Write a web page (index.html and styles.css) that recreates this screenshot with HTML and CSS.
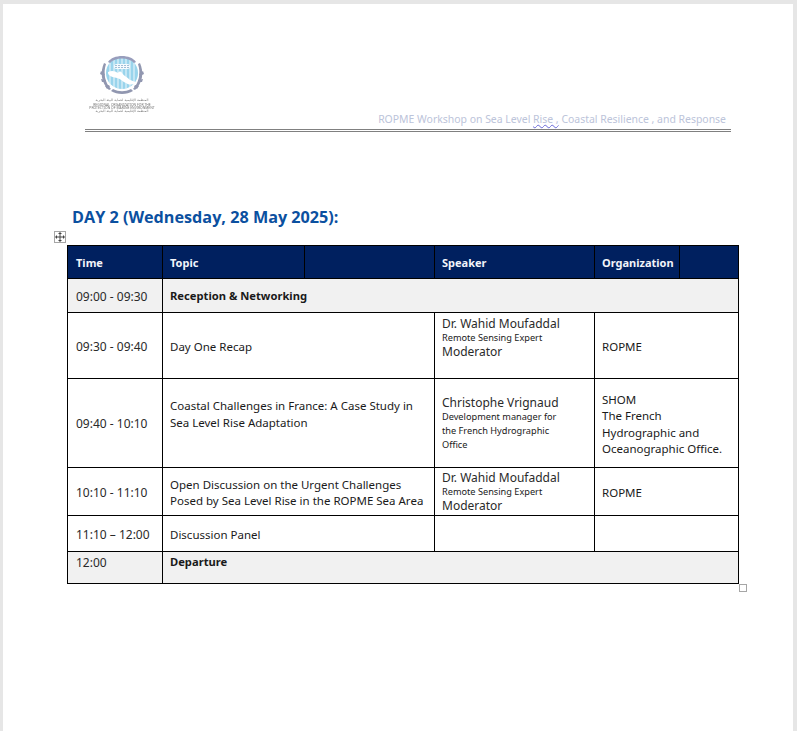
FILE: index.html
```html
<!DOCTYPE html>
<html lang="en">
<head>
<meta charset="utf-8">
<title>DAY 2</title>
<link rel="stylesheet" href="styles.css">
</head>
<body>
<div class="page">
  <header class="doc-header">
    <div class="logo">
      <svg class="logo-mark" width="46" height="46" viewBox="0 0 46 46" aria-hidden="true">
        <circle cx="23" cy="22" r="16" fill="#8fd0ea"/>
        <g stroke="#e4f4fa" stroke-width="1.1">
          <path d="M11 12V33M15 9V36M19 7V38M23 7V38M27 7V38M31 9V36M35 12V33"/>
        </g>
        <path d="M9 21c4-2 7-1 10 1 1-2 3-2 4 0 2 3 5 4 8 7 2 1 5 1 6 3-3 2-7 2-10 0-3-1-5-4-9-5-3-1-6-1-8-3-1-1-1-2-1-3z" fill="#fff"/>
        <rect x="15" y="13" width="16" height="5" rx="2.5" fill="#f4fbfe"/>
        <path d="M16 14.5h14M16 16.5h14" stroke="#7fa6c6" stroke-width=".8" stroke-dasharray="2 1"/>
        <path d="M9 11C14 3 32 3 37 11l-2 1C30 6 16 6 11 12z" fill="#8d93b5"/>
        <g fill="#868ca8">
          <path d="M5 12c-4 9-3 20 5 27l2-1C6 32 4 22 7 13z"/>
          <path d="M41 12c4 9 3 20-5 27l-2-1c6-6 8-16 5-25z"/>
          <path d="M2 20l4 3-1 2-4-2zM2 28l5 1 0 2-4 0zM6 35l4-1 1 2-3 2zM44 20l-4 3 1 2 4-2zM44 28l-5 1 0 2 4 0zM40 35l-4-1-1 2 3 2z"/>
          <path d="M12 40c6 4 16 4 22 0l-2-2c-6 3-12 3-18 0z"/>
        </g>
      </svg>
      <div class="logo-text">
        <span class="logo-ar">المنظمة الإقليمية لحماية البيئة البحرية</span>
        <span>REGIONAL ORGANIZATION FOR THE</span>
        <span>PROTECTION OF MARINE ENVIRONMENT</span>
        <span class="logo-ar">المنظمة الإقليمية لحماية البيئة البحرية</span>
      </div>
    </div>
    <p class="doc-title">ROPME Workshop on Sea Level <span class="spell">Rise ,</span> Coastal Resilience , and Response</p>
  </header>

  <h1 class="day-title">DAY 2 (Wednesday, 28 May 2025):</h1>

  <div class="table-wrap">
    <span class="move-handle">
      <svg width="10" height="10" viewBox="0 0 10 10" aria-hidden="true"><path d="M5 1v8M1 5h8" fill="none" stroke="#444" stroke-width="1"/><path d="M5 0 7 2H3zM5 10 3 8h4zM0 5l2-2v4zM10 5 8 7V3z" fill="#444"/></svg>
    </span>
    <table class="agenda">
      <colgroup>
        <col class="c-time"><col class="c-topic-a"><col class="c-topic-b"><col class="c-speaker"><col class="c-org-a"><col class="c-org-b">
      </colgroup>
      <tr class="r-head">
        <th>Time</th><th>Topic</th><th></th><th>Speaker</th><th>Organization</th><th></th>
      </tr>
      <tr class="r-grey r-34">
        <td class="time">09:00 - 09:30</td><td colspan="5" class="strong">Reception &amp; Networking</td>
      </tr>
      <tr class="r-66">
        <td class="time">09:30 - 09:40</td><td colspan="2">Day One Recap</td>
        <td class="raised"><div class="name">Dr. Wahid Moufaddal</div><div class="role">Remote Sensing Expert</div><div class="name">Moderator</div></td>
        <td colspan="2">ROPME</td>
      </tr>
      <tr class="r-89">
        <td class="time">09:40 - 10:10</td><td colspan="2" class="raised-more">Coastal Challenges in France: A Case Study in Sea Level Rise Adaptation</td>
        <td class="lowered"><div class="name">Christophe Vrignaud</div><div class="role">Development manager for<br>the French Hydrographic<br>Office</div></td>
        <td colspan="2">SHOM<br>The French<br>Hydrographic and<br>Oceanographic Office.</td>
      </tr>
      <tr class="r-48">
        <td class="time">10:10 - 11:10</td><td colspan="2">Open Discussion on the Urgent Challenges Posed by Sea Level Rise in the ROPME Sea Area</td>
        <td class="plain"><div class="name">Dr. Wahid Moufaddal</div><div class="role">Remote Sensing Expert</div><div class="name">Moderator</div></td>
        <td colspan="2">ROPME</td>
      </tr>
      <tr class="r-36">
        <td class="time">11:10 – 12:00</td><td colspan="2">Discussion Panel</td><td></td><td colspan="2"></td>
      </tr>
      <tr class="r-grey r-32 r-top">
        <td class="time">12:00</td><td colspan="5" class="strong">Departure</td>
      </tr>
    </table>
    <span class="resize-handle"></span>
  </div>
</div>
</body>
</html>
```
FILE: styles.css
```css
* { box-sizing: border-box; }
html, body { margin: 0; height: 100%; }
body {
  background: #e6e6e6;
  overflow: hidden;
  font-family: "Noto Sans", "Open Sans", sans-serif;
  color: #1a1a1a;
}
.page {
  margin: 4px 4px 0 3px;
  height: 727px;
  background: #fff;
  padding: 0 54px 0 64px;
}
.doc-header {
  margin: 0 8px 0 18px;
  padding-top: 47px;
  border-bottom: 3px double #808080;
  display: flex;
  justify-content: space-between;
  align-items: flex-start;
  box-sizing: content-box;
  height: 78px;
}
.logo {
  width: 70px;
  margin-left: 2px;
  display: flex;
  flex-direction: column;
  align-items: center;
  filter: blur(.35px);
  opacity: .9;
}
.logo-mark { display: block; margin-bottom: 2px; }
.logo-text {
  display: flex;
  flex-direction: column;
  align-items: center;
  font-size: 3.4px;
  line-height: 3.6px;
  color: #666;
  white-space: nowrap;
}
.logo-ar { font-family: "DejaVu Sans", sans-serif; }
.doc-title {
  margin: 61px 5px 0 0;
  font-size: 10.45px;
  line-height: 15px;
  color: #bcc4da;
  white-space: nowrap;
}
.spell { text-decoration: underline wavy #6a6ad8 1px; text-underline-offset: 1px; }
.day-title {
  margin: 73px 0 0 5px;
  font-family: "Open Sans", sans-serif;
  font-size: 16.2px;
  line-height: 24px;
  font-weight: 700;
  color: #0b50a0;
  white-space: nowrap;
}
.table-wrap { position: relative; margin-top: 16px; width: 671px; }
.move-handle {
  position: absolute;
  left: -13px;
  top: -14px;
  width: 12px;
  height: 12px;
  border: 1px solid #a6a6a6;
  background: #fff;
  display: flex;
  align-items: center;
  justify-content: center;
}
.resize-handle {
  position: absolute;
  right: -9px;
  bottom: -8px;
  width: 8px;
  height: 8px;
  border: 1px solid #a6a6a6;
  background: #fff;
}
.agenda {
  table-layout: fixed;
  border-collapse: collapse;
  width: 671px;
  font-size: 11.5px;
  line-height: 16.5px;
}
.c-time { width: 95px; }
.c-topic-a { width: 142px; }
.c-topic-b { width: 130px; }
.c-speaker { width: 160px; }
.c-org-a { width: 85px; }
.c-org-b { width: 59px; }
.agenda th, .agenda td {
  border: 1px solid #000;
  padding: 3px 6px 0 7px;
  text-align: left;
  vertical-align: middle;
}
.agenda tr > :first-child { padding-left: 8px; }
.agenda th {
  font-size: 11px;
  padding-top: 2px;
  background: #00205f;
  color: #f2f4fa;
  font-weight: 700;
  white-space: nowrap;
}
.agenda .time { font-size: 12px; color: #2a2a2a; }
.agenda .raised { padding-top: 0; padding-bottom: 15px; }
.agenda .raised-more { padding-top: 0; padding-bottom: 17px; }
.agenda .lowered { padding-top: 2px; }
.agenda .plain { padding-top: 0; }
.r-head { height: 33px; }
.r-34 { height: 34px; }
.r-66 { height: 66px; }
.r-89 { height: 89px; }
.r-48 { height: 48px; }
.r-36 { height: 36px; }
.r-32 { height: 32px; }
.r-grey td { background: #f1f1f1; }
.r-top td { vertical-align: top; }
.agenda .strong { font-weight: 700; font-size: 11.2px; padding-top: 1px; }
.agenda .r-top .strong { padding-top: 2px; }
.name { font-size: 12px; white-space: nowrap; line-height: 14px; color: #2a2a2a; }
.role { font-size: 9.2px; line-height: 14px; white-space: nowrap; }
```
